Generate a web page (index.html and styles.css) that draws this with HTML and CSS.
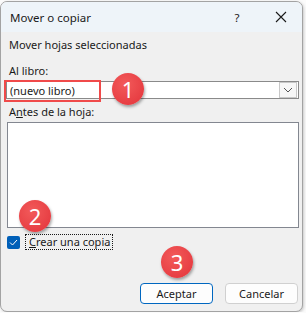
FILE: index.html
```html
<!DOCTYPE html>
<html lang="es">
<head>
  <meta charset="UTF-8" />
  <title>Mover o copiar</title>
  <link rel="stylesheet" href="styles.css">
</head>
<body>
  <div class="window">
    <div class="titlebar">
      <span class="title">Mover o copiar</span>
      <span class="help">?</span>
      <svg class="close" width="12" height="12" viewBox="0 0 12 12">
        <path d="M1 1 L11 11 M11 1 L1 11" stroke="#1a1a1a" stroke-width="1.1" fill="none" />
      </svg>
    </div>

    <div class="content">
      <div class="label first">Mover hojas seleccionadas</div>

      <div class="label gap">Al libro:</div>
      <div class="combo">
        <span class="combo-text">(nuevo libro)</span>
        <span class="combo-btn">
          <svg width="10" height="6" viewBox="0 0 10 6">
            <path d="M1 1 L5 5 L9 1" stroke="#555" stroke-width="1" fill="none" />
          </svg>
        </span>
      </div>

      <div class="label small-gap">A<u>n</u>tes de la hoja:</div>
      <div class="listbox"></div>

      <div class="check-row">
        <span class="checkbox">
          <svg width="9" height="7" viewBox="0 0 9 7">
            <path d="M1 3.5 L3.5 6 L8 1" stroke="#fff" stroke-width="1" fill="none" />
          </svg>
        </span>
        <span class="check-label"><u>C</u>rear una copia</span>
      </div>

      <div class="buttons">
        <button class="btn primary">Aceptar</button>
        <button class="btn">Cancelar</button>
      </div>
    </div>

    <!-- annotation overlay -->
    <div class="highlight"></div>
    <div class="badge b1">1</div>
    <div class="badge b2">2</div>
    <div class="badge b3">3</div>
  </div>
</body>
</html>
```

FILE: styles.css
```css
body {
  margin: 0;
  background: #fbfbfb;
  font-family: 'Segoe UI', 'Noto Sans', sans-serif;
  font-size: 11px;
  color: #1a1a1a;
}
.window {
  position: relative;
  width: 301px;
  height: 309px;
  margin-top: 1px;
  border: 1px solid #a3a3a3;
  border-radius: 7px;
  background: #f0f0f0;
  box-shadow: 1px 1px 3px rgba(0, 0, 0, 0.2);
  overflow: hidden;
  display: flex;
  flex-direction: column;
}
.titlebar {
  height: 30px;
  background: #eef4f9;
  display: flex;
  align-items: center;
  padding-left: 9px;
}
.title {
  flex: 1;
  font-size: 11.5px;
}
.help {
  width: 20px;
  text-align: center;
  margin-right: 28px;
  font-size: 11.5px;
}
.close {
  margin-right: 15px;
}
.content {
  padding: 0 3px 0 5px;
  display: flex;
  flex-direction: column;
}
.label {
  line-height: 16px;
  padding-left: 3px;
}
.label.first {
  margin-top: 5px;
}
.label.gap {
  margin-top: 10px;
}
.label.small-gap {
  margin-top: 5px;
}
.combo {
  margin-top: 2px;
  height: 16px;
  border: 1px solid #8a8a8a;
  background: #fff;
  display: flex;
  align-items: center;
}
.combo-text {
  flex: 1;
  padding-left: 3px;
}
.combo-btn {
  width: 16px;
  height: 14px;
  margin-right: 1px;
  border: 1px solid #c8c8c8;
  background: #f7f7f7;
  display: flex;
  align-items: center;
  justify-content: center;
}
.listbox {
  margin-top: 2px;
  margin-left: 1px;
  height: 104px;
  border: 1px solid #838790;
  background: #fff;
}
.check-row {
  margin-top: 6px;
  height: 16px;
  display: flex;
  align-items: center;
  padding-left: 1px;
}
.checkbox {
  width: 13px;
  height: 13px;
  border-radius: 2px;
  background: #005fb8;
  display: flex;
  align-items: center;
  justify-content: center;
}
.check-label {
  margin-left: 5px;
  padding: 0 2px 0 3px;
  line-height: 14px;
  border: 1px dotted #1a1a1a;
}
.buttons {
  margin-top: 33px;
  display: flex;
  justify-content: flex-end;
  gap: 12px;
  padding-right: 1px;
}
.btn {
  width: 73px;
  height: 21px;
  font-family: inherit;
  font-size: 11px;
  color: #1a1a1a;
  background: #fdfdfd;
  border: 1px solid #d0d0d0;
  border-radius: 4px;
  padding: 0;
}
.btn.primary {
  border-color: #0067c0;
}
.highlight {
  position: absolute;
  left: 3px;
  top: 78px;
  width: 93px;
  height: 18px;
  border: 2.5px solid #f04a4a;
}
.badge {
  position: absolute;
  width: 32px;
  height: 32px;
  border-radius: 50%;
  background: radial-gradient(circle at 40% 35%, #f25a5a, #e3333a);
  box-shadow: 1px 2px 3px rgba(0, 0, 0, 0.35);
  color: #fff;
  font-family: 'Noto Sans', sans-serif;
  font-size: 22px;
  line-height: 32px;
  text-align: center;
}
.b1 { left: 111px; top: 71px; }
.b2 { left: 18px; top: 198px; }
.b3 { left: 160px; top: 244px; }
```
